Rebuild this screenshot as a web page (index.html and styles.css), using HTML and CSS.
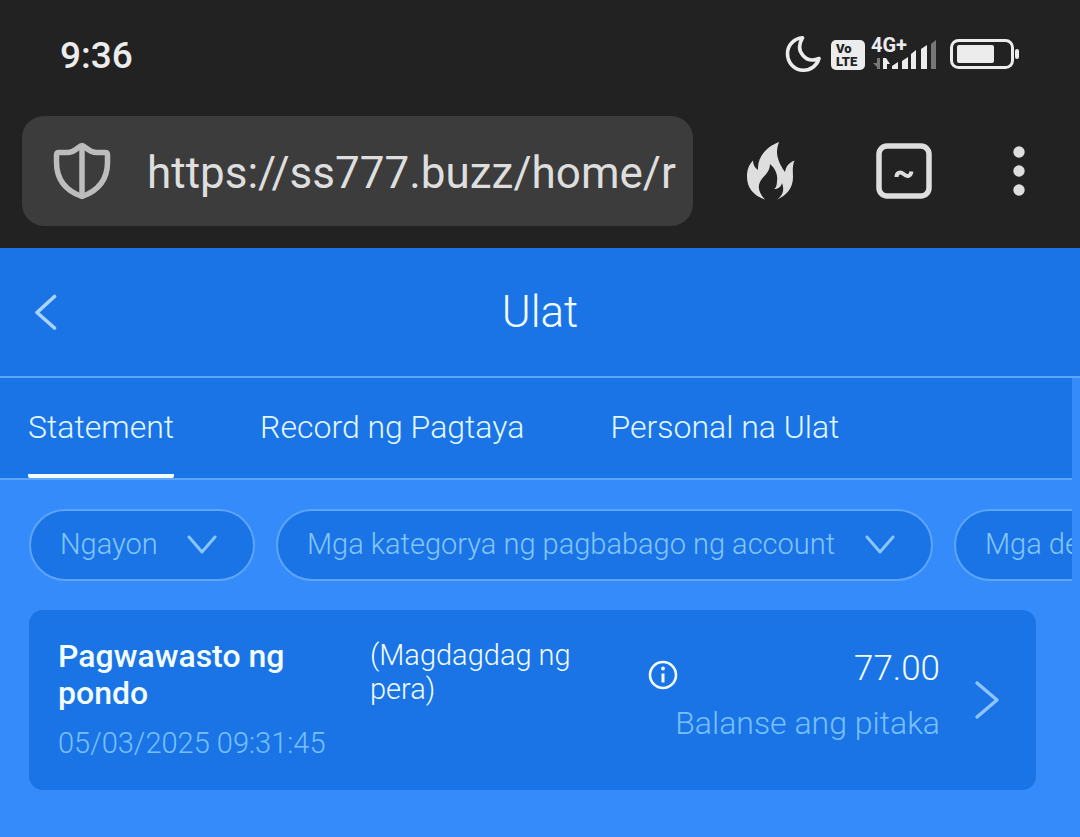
FILE: index.html
```html
<!DOCTYPE html>
<html lang="fil">
<head>
  <meta charset="UTF-8">
  <meta name="viewport" content="width=device-width, initial-scale=1.0">
  <title>Ulat</title>
  <link rel="stylesheet" href="styles.css">
</head>
<body>
  <div class="browser">
    <div class="status-bar">
      <time class="clock">9:36</time>
      <div class="status-icons">
        <svg class="moon" width="36" height="38" viewBox="0 0 36 38" fill="none" stroke="#ececec" stroke-width="3.6" stroke-linejoin="round">
          <path d="M17.5 1.8C9 2.500 2.500 9 2.500 17.500C2.500 27 9.500 34.200 18.500 34.200C26 34.200 32 29.500 34 22.500C27 25.500 21.500 23.500 18 19.500C14 15 13.500 8.500 17.500 1.800Z"/>
        </svg>
        <span class="volte"><span>Vo</span><span>LTE</span></span>
        <div class="signal">
          <span class="network">4G+</span>
          <svg width="66" height="34" viewBox="0 0 66 34" fill="#ececec">
            <path fill="#777" d="M6 20h3v11H6v-2L2 25h4z"/>
            <path d="M12 20h3l4 6h-3v5h-4z"/>
            <path d="M21 31v-3l6-4v7zM31 31v-8l6-4v12zM40 31V16l5-4v19zM50 31V11l6-4v24z"/>
            <path fill="#777" d="M60 31V6l5-4v29z"/>
          </svg>
        </div>
        <svg class="battery" width="70" height="32" viewBox="0 0 70 32">
          <rect x="1.500" y="1.500" width="61" height="27" rx="7" fill="none" stroke="#ececec" stroke-width="3"/>
          <rect x="7" y="6" width="37" height="18" rx="2" fill="#ececec"/>
          <rect x="65" y="10" width="4" height="10" rx="2" fill="#ececec"/>
        </svg>
      </div>
    </div>

    <div class="toolbar">
      <div class="address-bar">
        <svg class="shield" width="58" height="58" viewBox="0 0 58 58" fill="none" stroke="#bdbdbd" stroke-width="5.500" stroke-linejoin="round">
          <path d="M29 3.500C26 3.500 23 10.500 14 10.500H6Q3.500 10.500 3.500 13V20C3.500 37 12 48.500 29 54.500C46 48.500 54.500 37 54.500 20V13Q54.500 10.500 52 10.500H44C35 10.500 32 3.500 29 3.500Z"/>
          <path d="M29 4V54"/>
        </svg>
        <input class="url" type="text" value="https://ss777.buzz/home/r" aria-label="Address">
      </div>
      <div class="toolbar-buttons">
        <button class="tool" aria-label="Clear data">
          <svg width="48" height="58" viewBox="0 0 48 58" fill="#dedede">
            <path d="M32 0C21 4 10 14 11 28C8 26 6 23 6 18.500C1 24 0 29 0 35C0 46 7 54 18 57.500C13 52 10 46 13 40C16 34 23 31 23 22C29 27 31 34 30 39C30 43 29 46 27 47C31 47 34 45 35 41C38 49 35 54 30 57.500C40 53 46 46 46 35C46 30 45 25 47.500 18.500C41 21 39 25 38 30C33 23 30 16 30 10C30 6 31 3 32 0Z"/>
          </svg>
        </button>
        <button class="tool" aria-label="Tabs">
          <svg width="56" height="56" viewBox="0 0 56 56" fill="none" stroke="#dedede">
            <rect x="3" y="3" width="50" height="50" rx="8" stroke-width="5.500"/>
            <path d="M20.500 34C20.500 30 24 28 27.500 31C31 34 34.500 34 35.500 28.500" stroke-width="4"/>
          </svg>
        </button>
        <button class="tool" aria-label="Menu">
          <svg width="12" height="50" viewBox="0 0 12 50" fill="#dedede">
            <circle cx="6" cy="6" r="5.700"/>
            <circle cx="6" cy="25" r="5.700"/>
            <circle cx="6" cy="44" r="5.700"/>
          </svg>
        </button>
      </div>
    </div>
  </div>

  <header class="page-header">
    <button class="back" aria-label="Bumalik">
      <svg width="24" height="36" viewBox="0 0 24 36" fill="none" stroke="#a9d4ff" stroke-width="3.600" stroke-linecap="round" stroke-linejoin="round">
        <path d="M20.500 2.500L3 18.500L20.500 34"/>
      </svg>
    </button>
    <h1>Ulat</h1>
  </header>

  <main class="content">
    <nav class="tabs">
      <a class="tab active" href="#statement">Statement</a>
      <a class="tab" href="#record">Record ng Pagtaya</a>
      <a class="tab" href="#personal">Personal na Ulat</a>
    </nav>

    <div class="filters">
      <select class="filter" aria-label="Petsa">
        <option>Ngayon</option>
      </select>
      <select class="filter" aria-label="Kategorya">
        <option>Mga kategorya ng pagbabago ng account</option>
      </select>
      <select class="filter" aria-label="Detalye">
        <option>Mga detalye</option>
      </select>
    </div>

    <article class="record">
      <div class="record-main">
        <h2>Pagwawasto ng pondo</h2>
        <time>05/03/2025 09:31:45</time>
      </div>
      <p class="record-note">(Magdagdag ng pera)</p>
      <button class="info" aria-label="Impormasyon">
        <svg width="30" height="30" viewBox="0 0 30 30" fill="none" stroke="#f2fcff" stroke-width="2.600">
          <circle cx="15" cy="15" r="13"/>
          <path d="M15 13.500V22.500" stroke-width="3"/>
          <circle cx="15" cy="8.500" r="1.900" fill="#f2fcff" stroke="none"/>
        </svg>
      </button>
      <div class="record-amount">
        <strong>77.00</strong>
        <span>Balanse ang pitaka</span>
      </div>
      <svg class="chevron" width="26" height="40" viewBox="0 0 26 40" fill="none" stroke="#8fc4ff" stroke-width="3.400" stroke-linecap="round" stroke-linejoin="round">
        <path d="M3 3L23 20L3 37"/>
      </svg>
    </article>
  </main>
</body>
</html>
```

FILE: styles.css
```css
* {
  box-sizing: border-box;
  margin: 0;
  padding: 0;
}

body {
  font-family: Roboto, Arial, sans-serif;
  font-weight: 300;
  background-color: #348bf9;
  color: #f2fcff;
  min-height: 100vh;
  overflow-x: hidden;
}

button {
  background: none;
  border: none;
  cursor: pointer;
}

svg {
  display: block;
  flex: none;
}

/* Browser chrome */
.browser {
  background-color: #222222;
  padding-bottom: 22px;
}

.status-bar {
  display: flex;
  justify-content: space-between;
  align-items: center;
  height: 116px;
  padding: 0 60px 6px;
}

.clock {
  color: #ececec;
  font-size: 37px;
  font-weight: 500;
}

.status-icons {
  display: flex;
  align-items: center;
  gap: 10px;
}

.volte {
  display: flex;
  flex-direction: column;
  justify-content: center;
  width: 34px;
  height: 30px;
  padding-left: 5px;
  border-radius: 5px;
  background-color: #ececec;
  color: #222222;
  font-size: 13px;
  font-weight: 900;
  line-height: 13px;
}

.signal {
  position: relative;
  margin: 0 3px 0 -4px;
}

.network {
  position: absolute;
  top: -3px;
  left: 0;
  color: #ececec;
  font-size: 20px;
  font-weight: 700;
  line-height: 20px;
}

.toolbar {
  display: flex;
  align-items: center;
  padding: 0 55px 0 22px;
}

.address-bar {
  flex: 1;
  min-width: 0;
  display: flex;
  align-items: center;
  gap: 36px;
  height: 110px;
  padding: 0 16px 0 31px;
  border-radius: 22px;
  background-color: #3c3c3c;
}

.url {
  flex: 1;
  min-width: 0;
  padding-top: 4px;
  border: none;
  outline: none;
  background: none;
  color: #dedede;
  font-family: inherit;
  font-size: 44px;
}

.toolbar-buttons {
  flex: none;
  display: flex;
  align-items: center;
  gap: 81px;
  padding-left: 54px;
}

/* Page header */
.page-header {
  display: grid;
  grid-template-columns: 60px 1fr 60px;
  align-items: center;
  height: 130px;
  border-bottom: 2px solid #5ba5fb;
  background-color: #1a74e6;
}

.back {
  padding-left: 34px;
}

.page-header h1 {
  font-size: 44px;
  font-weight: 300;
  text-align: center;
}

.content {
  margin-right: 8px;
}

.tabs {
  display: flex;
  gap: 86px;
  height: 102px;
  padding: 0 28px;
  border-bottom: 2px solid #5ba5fb;
  background-color: #1a74e6;
}

.tab {
  display: flex;
  align-items: center;
  padding-top: 2px;
  border-bottom: 4px solid transparent;
  border-radius: 2px;
  color: #e2f8ff;
  font-size: 32px;
  text-decoration: none;
  white-space: nowrap;
}

.tab.active {
  border-bottom-color: #f2fcff;
}

/* Filters */
.filters {
  display: flex;
  gap: 21px;
  padding: 29px 0 29px 29px;
  overflow: hidden;
}

.filter {
  flex: none;
  height: 72px;
  padding: 0 95px 2px 29px;
  appearance: none;
  border: 2px solid #5ba5fb;
  border-radius: 36px;
  background: #1a74e6 url("data:image/svg+xml,%3Csvg xmlns='http://www.w3.org/2000/svg' width='30' height='20' fill='none' stroke='%2389c6ff' stroke-width='3' stroke-linecap='round' stroke-linejoin='round'%3E%3Cpath d='M2 2L15 17L28 2'/%3E%3C/svg%3E") no-repeat right 36px center;
  color: #84c6ff;
  font-family: inherit;
  font-size: 29px;
  font-weight: 300;
}

/* Record card */
.record {
  display: flex;
  align-items: flex-start;
  min-height: 180px;
  margin: 0 36px 0 29px;
  padding: 28px 36px 28px 29px;
  border-radius: 14px;
  background-color: #1a74e6;
}

.record-main {
  flex: 0 1 312px;
}

.record-main h2 {
  max-width: 250px;
  font-size: 32px;
  font-weight: 500;
  line-height: 37px;
}

.record-main time {
  display: block;
  margin-top: 13px;
  color: #78c0ff;
  font-size: 29px;
  line-height: 36px;
}

.record-note {
  flex: 0 1 240px;
  font-size: 29px;
  line-height: 34px;
}

.info {
  align-self: flex-start;
  margin: 22px 0 0 38px;
}

.record-amount {
  flex: 1;
  display: flex;
  flex-direction: column;
  align-items: flex-end;
  gap: 14px;
  min-width: 0;
  padding-top: 10px;
  white-space: nowrap;
}

.record-amount strong {
  font-size: 35px;
  font-weight: 300;
  line-height: 42px;
}

.record-amount span {
  color: #78c0ff;
  font-size: 32px;
  line-height: 38px;
}

.chevron {
  align-self: center;
  margin-left: 34px;
}
```
